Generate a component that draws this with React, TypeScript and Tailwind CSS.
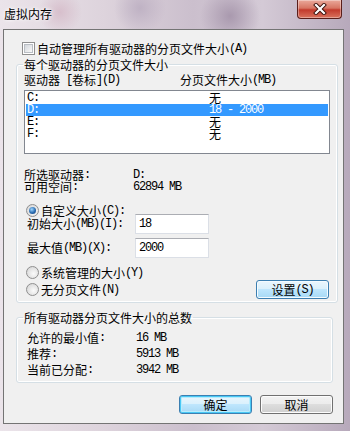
import React from "react";

function T({ s }: { s: string }) {
  const parts = s.match(/[\x00-\x7f]+|[^\x00-\x7f]+/g) || [];
  return (
    <>
      {parts.map((p, i) =>
        /^[\x00-\x7f]/.test(p) ? (
          <span
            key={i}
            className="inline-block align-top h-[12px] leading-[12px] font-['Liberation_Mono',monospace] text-[12px] tracking-[-1.2px] whitespace-pre"
          >
            {p}
          </span>
        ) : (
          <span key={i} className="inline-block align-top h-[12px] leading-[12px]">
            {p}
          </span>
        )
      )}
    </>
  );
}

function Checkbox() {
  return (
    <span className="w-[13px] h-[13px] border border-[#8f8f8f] bg-white flex items-center justify-center shrink-0">
      <span className="w-[9px] h-[9px] border border-[#b9bec4] bg-[linear-gradient(135deg,#d3d7dc,#f8f8f8)]" />
    </span>
  );
}

function Radio({ on }: { on?: boolean }) {
  return (
    <span className="w-[13px] h-[13px] rounded-full border border-[#8f8f8f] bg-[radial-gradient(circle_at_60%_60%,#fbfbfb,#d0d0d0)] flex items-center justify-center shrink-0">
      {on && (
        <span className="w-[7px] h-[7px] rounded-full bg-[radial-gradient(circle_at_40%_35%,#9fd6ff,#2a6cb0_55%,#173f78)]" />
      )}
    </span>
  );
}

function Btn({ label, kind }: { label: string; kind: "normal" | "hover" | "default" }) {
  const base =
    "w-[73px] h-[19px] rounded-[3px] border flex items-center justify-center leading-[12px]";
  const style =
    kind === "normal"
      ? "border-[#707070] bg-[linear-gradient(#f2f2f2_0%,#ebebeb_50%,#dddddd_50%,#cfcfcf_100%)] shadow-[inset_0_0_0_1px_#fcfcfc]"
      : kind === "hover"
      ? "border-[#3c7fb1] bg-[linear-gradient(#eaf6fd_0%,#d9f0fc_50%,#bee6fd_50%,#a7d9f5_100%)] shadow-[inset_0_0_0_1px_#f4fbff]"
      : "border-[#3c7fb1] bg-[linear-gradient(#eaf6fd_0%,#d9f0fc_50%,#bee6fd_50%,#a7d9f5_100%)] shadow-[inset_0_0_0_1px_#48c8f5,inset_0_0_0_2px_#b8ecfc]";
  return (
    <div className={`${base} ${style}`}>
      <span className="block h-[12px]">
        <T s={label} />
      </span>
    </div>
  );
}

function TextBox({ value }: { value: string }) {
  return (
    <div className="w-[74px] h-[20px] border border-[#dbdfe6] border-t-[#abadb3] bg-white flex items-center pl-[3px] leading-[12px]">
      <span className="block h-[12px]">
        <T s={value} />
      </span>
    </div>
  );
}

export default function App() {
  const rows: [string, string, boolean][] = [
    ["C:", "无", false],
    ["D:", "18 - 2000", true],
    ["E:", "无", false],
    ["F:", "无", false],
  ];
  return (
    <div className="w-[350px] h-[431px] overflow-hidden font-['Noto_Sans_CJK_SC',sans-serif] text-[12px] text-black bg-[radial-gradient(circle_at_60px_12px,#d7bfcc_0,transparent_22px),radial-gradient(circle_at_140px_8px,#bfb2c4_0,transparent_26px),radial-gradient(circle_at_230px_16px,#a999ae_0,transparent_30px),linear-gradient(90deg,#ebe4ea_0%,#ddd3dc_30%,#cbbfcd_55%,#d4cad6_75%,#b7a9bb_100%)]">
      {/* title bar */}
      <div className="h-[29px] flex items-start justify-between">
        <div className="pl-[4px] pt-[8px] h-[20px] leading-[12px] [text-shadow:0_0_5px_#fff,0_0_3px_#fff]">
          <T s="虚拟内存" />
        </div>
        <div className="mr-[8px] w-[45px] h-[19px] rounded-b-[4px] border border-t-0 border-[#5a1e1a] bg-[linear-gradient(#eaa99b_0%,#d77563_45%,#c23a2c_55%,#d9735e_100%)] shadow-[inset_0_0_0_1px_rgba(255,255,255,0.35)] flex items-center justify-center">
          <svg width="14" height="12" viewBox="0 0 14 12">
            <path d="M3 2 L11 10 M11 2 L3 10" stroke="#3a0f0a" strokeWidth="4" strokeLinecap="square" />
            <path d="M3 2 L11 10 M11 2 L3 10" stroke="#ffffff" strokeWidth="2.2" strokeLinecap="square" />
          </svg>
        </div>
      </div>

      {/* client */}
      <div className="ml-[3px] w-[341px] h-[395px] border border-[#747474] bg-[#f0f0f0] flex flex-col">
        <div className="flex flex-col pl-[12px]">
          <div className="mt-[12px] ml-[6px] h-[13px] flex items-center gap-[2px]">
            <Checkbox />
            <span className="block h-[12px]">
              <T s="自动管理所有驱动器的分页文件大小(A)" />
            </span>
          </div>

          <fieldset className="mt-[3px] w-[317px] border border-[#d5dfe5] rounded-[3px] px-[7px] pb-[3px] shadow-[inset_0_0_0_1px_#ffffff]">
            <legend className="-ml-[1px] px-[1px] h-[13px] leading-[12px] pt-[1px]">
              <T s="每个驱动器的分页文件大小" />
            </legend>
            <div className="mt-[3px] h-[12px] leading-[12px] flex">
              <div className="w-[156px]">
                <T s="驱动器 [卷标](D)" />
              </div>
              <div>
                <T s="分页文件大小(MB)" />
              </div>
            </div>
            <div className="mt-[4px] w-[306px] h-[64px] border border-[#828790] bg-white p-[1px] flex flex-col">
              {rows.map(([d, v, sel]) => (
                <div
                  key={d}
                  className={`h-[12px] leading-[12px] flex ${sel ? "bg-[#3399ff] text-white" : ""}`}
                >
                  <div className="w-[183px] pl-[1px]">
                    <T s={d} />
                  </div>
                  <div>
                    <T s={v} />
                  </div>
                </div>
              ))}
            </div>

            <div className="mt-[15px] h-[12px] leading-[12px] flex">
              <div className="w-[109px]">
                <T s="所选驱动器:" />
              </div>
              <div>
                <T s="D:" />
              </div>
            </div>
            <div className="h-[12px] leading-[12px] flex">
              <div className="w-[109px]">
                <T s="可用空间:" />
              </div>
              <div>
                <T s="62894 MB" />
              </div>
            </div>

            <div className="mt-[11px] ml-[2px] h-[13px] flex items-center gap-[2px]">
              <Radio on />
              <span className="block h-[12px]">
                <T s="自定义大小(C):" />
              </span>
            </div>
            <div className="-mt-[3px] h-[20px] flex items-center">
              <div className="w-[111px] pl-[3px] h-[12px] leading-[12px]">
                <T s="初始大小(MB)(I):" />
              </div>
              <TextBox value="18" />
            </div>
            <div className="mt-[4px] h-[20px] flex items-center">
              <div className="w-[111px] pl-[3px] h-[12px] leading-[12px]">
                <T s="最大值(MB)(X):" />
              </div>
              <TextBox value="2000" />
            </div>
            <div className="mt-[8px] ml-[2px] h-[13px] flex items-center gap-[2px]">
              <Radio />
              <span className="block h-[12px]">
                <T s="系统管理的大小(Y)" />
              </span>
            </div>
            <div className="mt-[1px] h-[19px] flex items-center justify-between">
              <div className="ml-[2px] flex items-center gap-[2px]">
                <Radio />
                <span className="block h-[12px]">
                  <T s="无分页文件(N)" />
                </span>
              </div>
              <div className="mr-[1px]">
                <Btn label="设置(S)" kind="hover" />
              </div>
            </div>
          </fieldset>

          <fieldset className="mt-[8px] w-[317px] border border-[#d5dfe5] rounded-[3px] px-[7px] pb-[4px] shadow-[inset_0_0_0_1px_#ffffff]">
            <legend className="-ml-[1px] px-[1px] h-[13px] leading-[12px] pt-[1px]">
              <T s="所有驱动器分页文件大小的总数" />
            </legend>
            <div className="mt-[6px] flex flex-col">
              {[
                ["允许的最小值:", "16 MB"],
                ["推荐:", "5913 MB"],
                ["当前已分配:", "3942 MB"],
              ].map(([k, v]) => (
                <div key={k} className="h-[16px] py-[2px] flex">
                  <div className="w-[112px] pl-[3px]">
                    <T s={k} />
                  </div>
                  <div>
                    <T s={v} />
                  </div>
                </div>
              ))}
            </div>
          </fieldset>
        </div>

        <div className="mt-[12px] pr-[10px] flex justify-end gap-[8px]">
          <Btn label="确定" kind="default" />
          <Btn label="取消" kind="normal" />
        </div>
      </div>
    </div>
  );
}
